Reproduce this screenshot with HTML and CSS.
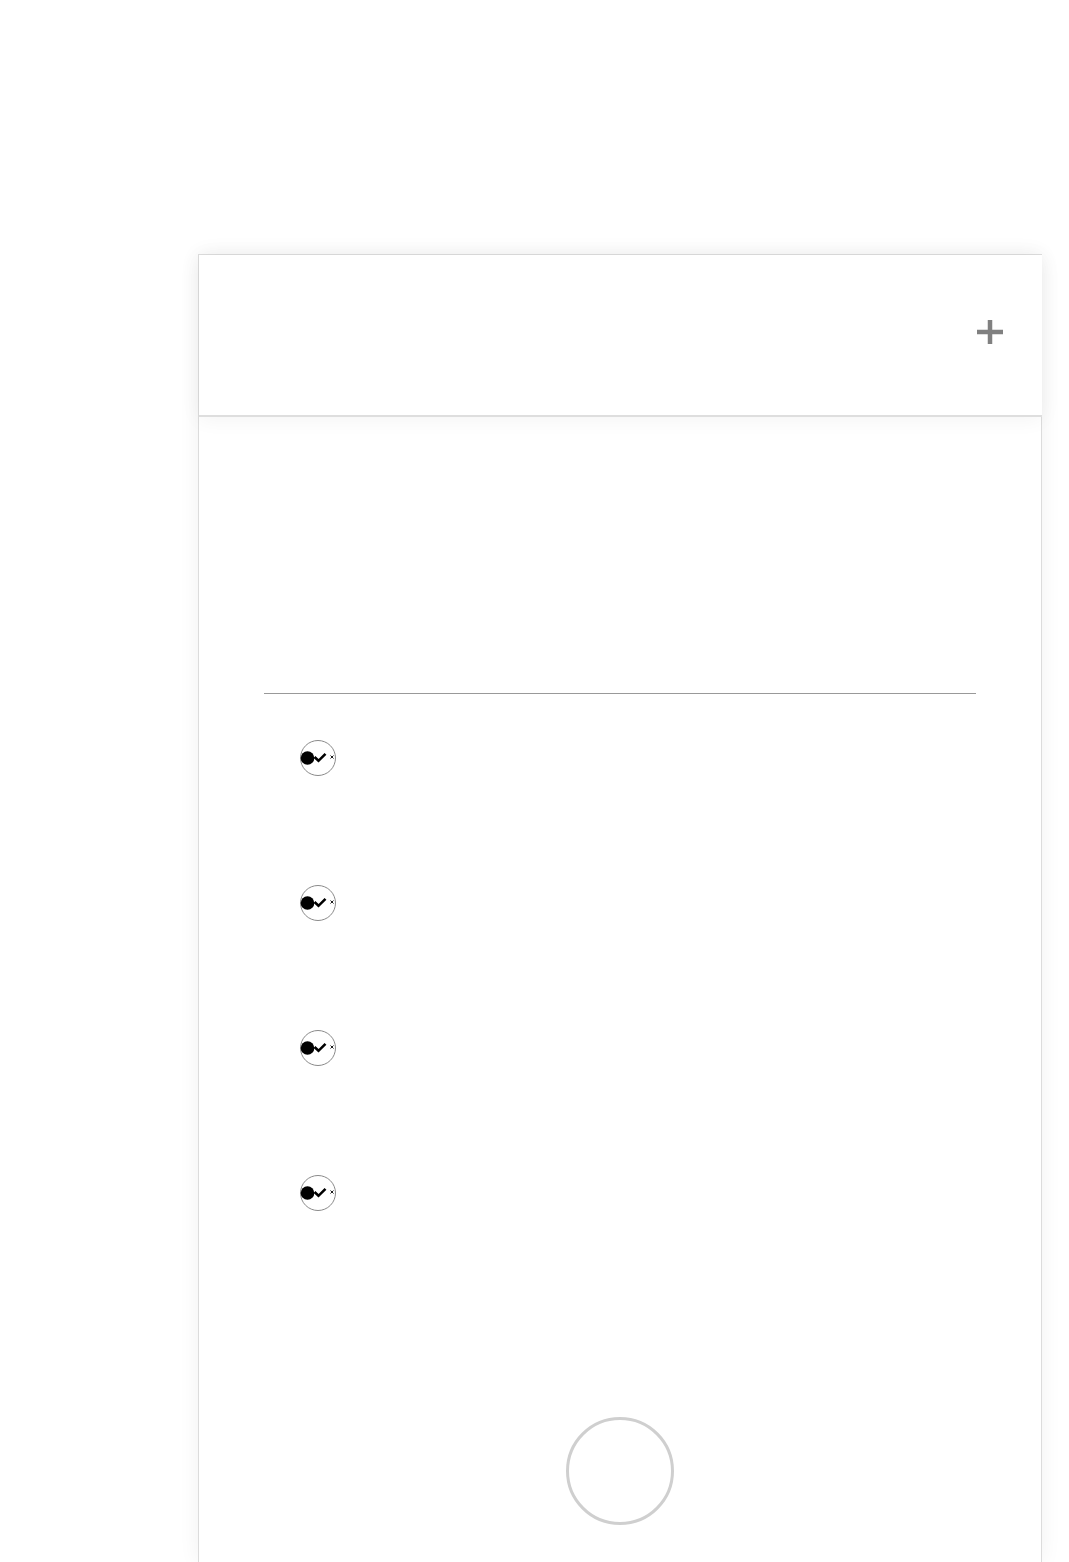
FILE: index.html
```html
<!DOCTYPE html>
<html lang="en">
<head>
    <meta charset="UTF-8">
    <meta name="viewport" content="width=device-width, initial-scale=1.0">
    <title>Todo</title>
    <link rel="stylesheet" href="styles.css">
</head>
<body>
    <div class="phone">
        <header class="top-bar">
            <button class="add-btn" aria-label="Add">
                <svg width="28" height="28" viewBox="0 0 28 28">
                    <path d="M14 2v24M1 14h26" stroke="#808080" stroke-width="4.5" fill="none"/>
                </svg>
            </button>
        </header>
        <main class="content">
            <div class="field"></div>
            <ul class="todo-list">
                <li class="todo-item"><span class="check"><svg width="36" height="36" viewBox="0 0 36 36"><circle cx="18" cy="18" r="17.5" fill="#fff" stroke="#8a8a8a" stroke-width="1"/><circle cx="7.5" cy="18" r="6.8" fill="#000"/><path d="M14.5 17l4 3.8 7-7" stroke="#000" stroke-width="2.6" fill="none"/><path d="M30.5 15.5l3 3M33.5 15.5l-3 3" stroke="#000" stroke-width="0.9" fill="none"/></svg></span></li>
                <li class="todo-item"><span class="check"><svg width="36" height="36" viewBox="0 0 36 36"><circle cx="18" cy="18" r="17.5" fill="#fff" stroke="#8a8a8a" stroke-width="1"/><circle cx="7.5" cy="18" r="6.8" fill="#000"/><path d="M14.5 17l4 3.8 7-7" stroke="#000" stroke-width="2.6" fill="none"/><path d="M30.5 15.5l3 3M33.5 15.5l-3 3" stroke="#000" stroke-width="0.9" fill="none"/></svg></span></li>
                <li class="todo-item"><span class="check"><svg width="36" height="36" viewBox="0 0 36 36"><circle cx="18" cy="18" r="17.5" fill="#fff" stroke="#8a8a8a" stroke-width="1"/><circle cx="7.5" cy="18" r="6.8" fill="#000"/><path d="M14.5 17l4 3.8 7-7" stroke="#000" stroke-width="2.6" fill="none"/><path d="M30.5 15.5l3 3M33.5 15.5l-3 3" stroke="#000" stroke-width="0.9" fill="none"/></svg></span></li>
                <li class="todo-item"><span class="check"><svg width="36" height="36" viewBox="0 0 36 36"><circle cx="18" cy="18" r="17.5" fill="#fff" stroke="#8a8a8a" stroke-width="1"/><circle cx="7.5" cy="18" r="6.8" fill="#000"/><path d="M14.5 17l4 3.8 7-7" stroke="#000" stroke-width="2.6" fill="none"/><path d="M30.5 15.5l3 3M33.5 15.5l-3 3" stroke="#000" stroke-width="0.9" fill="none"/></svg></span></li>
            </ul>
            <div class="home-btn"></div>
        </main>
    </div>
</body>
</html>
```
FILE: styles.css
```css
html, body {
    margin: 0;
    padding: 0;
    background-color: #fff;
    font-family: 'Roboto', sans-serif;
}
.phone {
    width: 842px;
    height: 1307px;
    margin: 254px 0 0 198px;
    border: 1px solid #dcdcdc;
    border-bottom: none;
    box-shadow: 0 0 20px rgba(0,0,0,0.06);
    display: flex;
    flex-direction: column;
}
.top-bar {
    position: relative;
    z-index: 1;
    height: 162px;
    margin-right: -1px;
    border-bottom: 2px solid #dedede;
    background-color: #fff;
    box-shadow: 0 2px 20px rgba(0,0,0,0.05);
    display: flex;
    align-items: center;
    justify-content: flex-end;
    padding: 0 38px 6px 0;
    box-sizing: border-box;
    flex-shrink: 0;
}
.add-btn {
    background: none;
    border: none;
    padding: 0;
    width: 28px;
    height: 28px;
    cursor: pointer;
    display: block;
}
.add-btn svg {
    display: block;
}
.content {
    flex: 1;
    padding: 0 65px;
    display: flex;
    flex-direction: column;
    overflow: hidden;
}
.field {
    height: 276px;
    flex-shrink: 0;
    border-bottom: 1px solid #999;
}
.todo-list {
    list-style: none;
    margin: 46px 0 0;
    padding: 0 0 0 36px;
    display: flex;
    flex-direction: column;
    gap: 109px;
}
.todo-item {
    height: 36px;
    display: flex;
    align-items: center;
}
.check {
    width: 36px;
    height: 36px;
    display: block;
}
.check svg {
    display: block;
}
.home-btn {
    width: 102px;
    height: 102px;
    flex-shrink: 0;
    border: 3px solid #cfcfcf;
    border-radius: 50%;
    margin: 206px auto 0;
}
```
